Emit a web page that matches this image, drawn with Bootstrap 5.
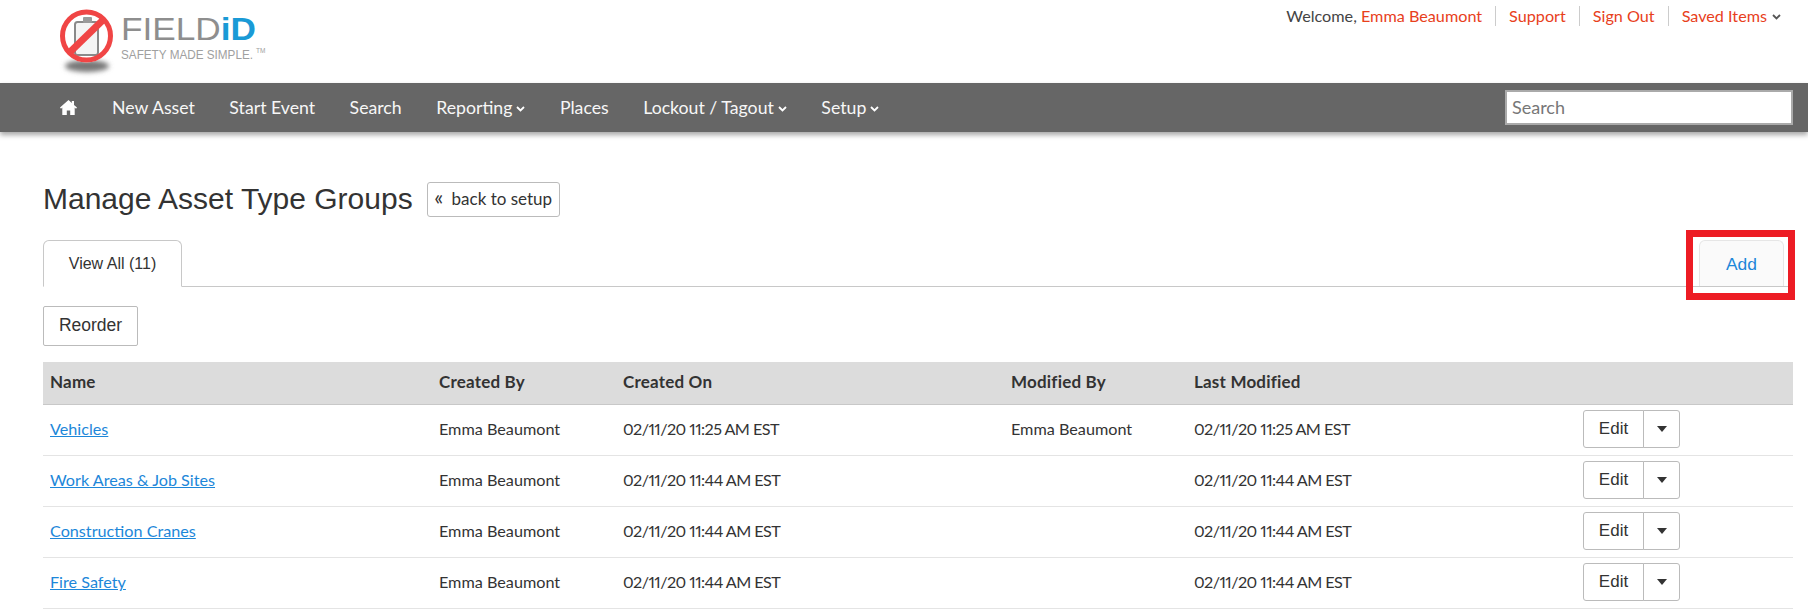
<!DOCTYPE html>
<html lang="en">
<head>
<meta charset="utf-8">
<title>Manage Asset Type Groups</title>
<link href="https://cdn.jsdelivr.net/npm/bootstrap@5.3.0/dist/css/bootstrap.min.css" rel="stylesheet">
<style>
html,body{height:612px;overflow:hidden}
body{font-family:"Lato","Liberation Sans",sans-serif;font-size:16px;color:#333;background:#fff;font-variant-numeric:proportional-nums}
.site-top{height:83px;padding:0 27px 0 58px}
.brand-logo{display:block;margin-top:9px}
.top-links{margin-top:6px;font-size:16.2px;line-height:20px;color:#444}
.top-links a{color:#e8401c;text-decoration:none}
.top-links .sep{border-left:1px solid #ccc;padding-left:13px;margin-left:13px}
.chev{margin-left:5px;vertical-align:2px}
.main-bar{height:49px;background:#666;box-shadow:0 3px 5px rgba(0,0,0,.35);padding:0 15px 0 60px;position:relative}
.main-bar .nav-link{color:#f7f7f7;font-size:17.7px;padding:2px 0 0;margin-right:34.500px;white-space:nowrap}
.main-bar .nav-link .chev{margin-left:4px}
.main-bar .home-link{margin-right:35px;padding:0;line-height:0}
.bar-search{width:288px;height:35px;border:2px solid #aaa;border-radius:0;padding:0 5px 2px;font-size:18px;font-family:inherit;box-shadow:none}
.bar-search::placeholder{color:#777;opacity:1}
.page-body{padding:0 15px 0 43px}
.title-row{margin-top:50px;height:35px}
.page-title{font-family:"Liberation Sans",Arial,sans-serif;font-size:30px;font-weight:400;color:#333;margin:0 14px 0 0;line-height:35px;padding-bottom:2px}
.back-btn{height:35px;width:133px;border:1px solid #bbb;border-radius:3px;font-size:17px;color:#333;background:#fff;padding:0;line-height:32px;text-decoration:none;text-align:center;white-space:nowrap}
.back-btn .quo{font-size:21px;line-height:1;margin-right:4px}
.tab-strip{margin-top:23px;border-bottom:1px solid #c8c8c8;height:47px;position:relative}
.tab-strip .nav-link{font-family:"Liberation Sans",Arial,sans-serif;font-size:16px;height:47px;line-height:26px;padding:10px 0;text-align:center;border-radius:6px 6px 0 0}
.tab-strip .tab-view{width:139px;color:#333;border:1px solid #c8c8c8;border-bottom-color:#fff;background:#fff}
.tab-strip .nav-link.tab-add{width:85px;height:46px;font-size:17.400px;color:#1d87d9;background:#fafafa;border:1px solid #e6e6e6;border-bottom:0;margin-right:9px}
.add-item{position:relative}
.add-mark{position:absolute;left:-13px;top:-10px;width:109px;height:70px;border:7px solid #ed1c24;pointer-events:none}
.reorder-btn{display:block;margin-top:19px;width:95px;height:40px;border:1px solid #bbb;border-radius:2px;background:#fff;color:#333;font-family:"Liberation Sans",Arial,sans-serif;font-size:17.500px;padding:0 0 2px}
.asset-table{margin:16px 0 0;width:1750px;table-layout:fixed;font-size:16.2px;color:#333}
.asset-table th{background:#dcdcdc;height:42px;padding:0 7px 3px;font-size:17px;letter-spacing:.2px;font-weight:700;vertical-align:middle;border-bottom:1px solid #c8c8c8}
.asset-table td{height:51px;padding:0 7px;vertical-align:middle;border-bottom:1px solid #e4e4e4;white-space:nowrap}
.asset-table td.stamp{letter-spacing:-.55px}
.asset-table a{color:#1d87d9}
.row-actions{height:38px;margin-top:-1px}
.row-actions .btn{border:1px solid #bbb;background:#fff;color:#333;font-family:"Liberation Sans",Arial,sans-serif;font-size:17px;padding:0;border-radius:3px;height:38px}
.row-actions .act-edit{width:61px}
.row-actions .act-more{width:37px;margin-left:-1px}
.tri{display:inline-block;width:0;height:0;border-left:5.5px solid transparent;border-right:5.5px solid transparent;border-top:6px solid #333;vertical-align:2px}
</style>
</head>
<body>
<header class="site-top d-flex justify-content-between align-items-start">
  <a href="#" class="brand-logo" aria-label="Field iD">
    <svg width="212" height="70" viewBox="0 0 212 70" xmlns="http://www.w3.org/2000/svg">
      <defs><filter id="sh" x="-30%" y="-80%" width="160%" height="260%"><feGaussianBlur stdDeviation="2.5"/></filter></defs>
      <ellipse cx="29" cy="57" rx="22" ry="6" fill="#777" filter="url(#sh)"/>
      <circle cx="28.500" cy="27" r="26.500" fill="#fff"/>
      <rect x="17" y="13" width="23" height="33" rx="2.500" fill="#f4f4f4" stroke="#8a8a8a" stroke-width="2"/>
      <rect x="25" y="8" width="9" height="6" rx="1" fill="#9a9a9a"/>
      <circle cx="28.500" cy="27" r="24" fill="none" stroke="#f04545" stroke-width="5"/>
      <line x1="11" y1="44" x2="46" y2="10" stroke="#f04545" stroke-width="7"/>
      <text x="63" y="31" font-family="Liberation Sans, sans-serif" font-size="32" textLength="135" lengthAdjust="spacingAndGlyphs" fill="#8e8e8e">FIELD<tspan fill="#1a9ad6" font-weight="700">iD</tspan></text>
      <text x="63" y="50" font-family="Liberation Sans, sans-serif" font-size="12" textLength="132" lengthAdjust="spacingAndGlyphs" fill="#a0a0a0">SAFETY MADE SIMPLE.</text>
      <text x="198" y="44" font-family="Liberation Sans, sans-serif" font-size="6.500" fill="#a0a0a0">TM</text>
    </svg>
  </a>
  <div class="top-links d-flex">
    <span>Welcome, <a href="#">Emma Beaumont</a></span>
    <span class="sep"><a href="#">Support</a></span>
    <span class="sep"><a href="#">Sign Out</a></span>
    <span class="sep"><a href="#">Saved Items<svg class="chev" width="9" height="6" viewBox="0 0 9 6"><path d="M1 1l3.500 3.500L8 1" fill="none" stroke="#555" stroke-width="1.800"/></svg></a></span>
  </div>
</header>
<nav class="main-bar d-flex align-items-center">
  <ul class="nav flex-nowrap align-items-center flex-grow-1">
    <li class="nav-item"><a class="nav-link home-link" href="#" aria-label="Home"><svg width="17" height="15" viewBox="0 0 17 15"><path d="M8.500 0L0 7.600l1 1.100 1.300-1.100V15h4.500v-4.500h3.400V15h4.500V7.600L16 8.700l1-1.100-3-2.700V1h-2.200v1.900z" fill="#fff"/></svg></a></li>
    <li class="nav-item"><a class="nav-link" href="#">New Asset</a></li>
    <li class="nav-item"><a class="nav-link" href="#">Start Event</a></li>
    <li class="nav-item"><a class="nav-link" href="#">Search</a></li>
    <li class="nav-item"><a class="nav-link" href="#">Reporting<svg class="chev" width="9" height="6" viewBox="0 0 9 6"><path d="M1 1l3.500 3.500L8 1" fill="none" stroke="#fff" stroke-width="1.800"/></svg></a></li>
    <li class="nav-item"><a class="nav-link" href="#">Places</a></li>
    <li class="nav-item"><a class="nav-link" href="#">Lockout / Tagout<svg class="chev" width="9" height="6" viewBox="0 0 9 6"><path d="M1 1l3.500 3.500L8 1" fill="none" stroke="#fff" stroke-width="1.800"/></svg></a></li>
    <li class="nav-item"><a class="nav-link" href="#">Setup<svg class="chev" width="9" height="6" viewBox="0 0 9 6"><path d="M1 1l3.500 3.500L8 1" fill="none" stroke="#fff" stroke-width="1.800"/></svg></a></li>
  </ul>
  <input class="form-control bar-search" type="text" placeholder="Search" aria-label="Search">
</nav>
<main class="page-body">
  <div class="title-row d-flex align-items-center">
    <h1 class="page-title">Manage Asset Type Groups</h1>
    <a class="back-btn" href="#"><span class="quo">«</span> back to setup</a>
  </div>
  <ul class="nav tab-strip justify-content-between">
    <li class="nav-item"><a class="nav-link tab-view" href="#">View All (11)</a></li>
    <li class="nav-item add-item"><a class="nav-link tab-add" href="#">Add</a><span class="add-mark"></span></li>
  </ul>
  <button class="btn reorder-btn" type="button">Reorder</button>
  <table class="table table-borderless asset-table">
    <colgroup><col style="width:389px"><col style="width:184px"><col style="width:388px"><col style="width:183px"><col style="width:389px"><col style="width:217px"></colgroup>
    <thead><tr><th>Name</th><th>Created By</th><th>Created On</th><th>Modified By</th><th>Last Modified</th><th></th></tr></thead>
    <tbody>
      <tr><td><a href="#">Vehicles</a></td><td>Emma Beaumont</td><td class="stamp">02/11/20 11:25 AM EST</td><td>Emma Beaumont</td><td class="stamp">02/11/20 11:25 AM EST</td><td><div class="btn-group row-actions"><button class="btn act-edit" type="button">Edit</button><button class="btn act-more" type="button" aria-label="More"><span class="tri"></span></button></div></td></tr>
      <tr><td><a href="#">Work Areas &amp; Job Sites</a></td><td>Emma Beaumont</td><td class="stamp">02/11/20 11:44 AM EST</td><td></td><td class="stamp">02/11/20 11:44 AM EST</td><td><div class="btn-group row-actions"><button class="btn act-edit" type="button">Edit</button><button class="btn act-more" type="button" aria-label="More"><span class="tri"></span></button></div></td></tr>
      <tr><td><a href="#">Construction Cranes</a></td><td>Emma Beaumont</td><td class="stamp">02/11/20 11:44 AM EST</td><td></td><td class="stamp">02/11/20 11:44 AM EST</td><td><div class="btn-group row-actions"><button class="btn act-edit" type="button">Edit</button><button class="btn act-more" type="button" aria-label="More"><span class="tri"></span></button></div></td></tr>
      <tr><td><a href="#">Fire Safety</a></td><td>Emma Beaumont</td><td class="stamp">02/11/20 11:44 AM EST</td><td></td><td class="stamp">02/11/20 11:44 AM EST</td><td><div class="btn-group row-actions"><button class="btn act-edit" type="button">Edit</button><button class="btn act-more" type="button" aria-label="More"><span class="tri"></span></button></div></td></tr>
    </tbody>
  </table>
</main>
<script src="https://cdn.jsdelivr.net/npm/bootstrap@5.3.0/dist/js/bootstrap.bundle.min.js"></script>
</body>
</html>
